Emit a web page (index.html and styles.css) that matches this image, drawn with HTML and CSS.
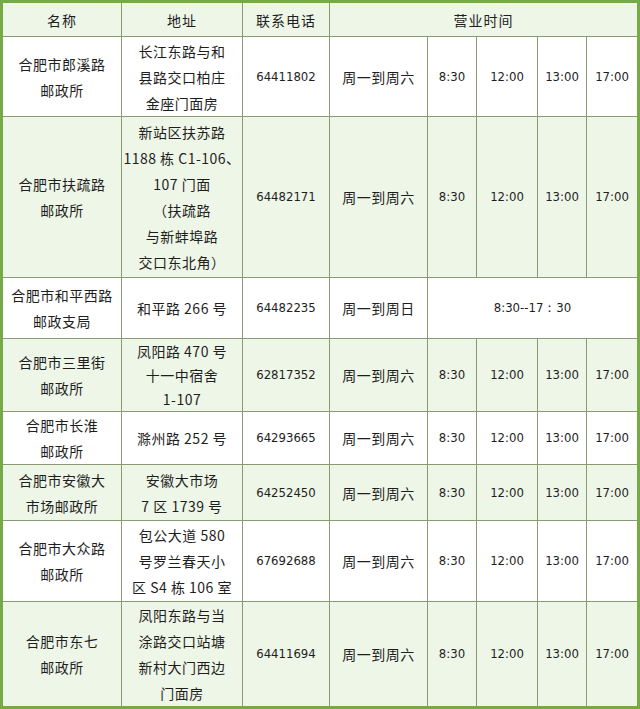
FILE: index.html
```html
<!DOCTYPE html>
<html lang="zh">
<head>
<meta charset="utf-8">
<link rel="stylesheet" href="styles.css">
</head>
<body>
<table class="tbl">
  <colgroup>
    <col class="c-name"><col class="c-addr"><col class="c-tel"><col class="c-day">
    <col class="c-t1"><col class="c-t2"><col class="c-t3"><col class="c-t4">
  </colgroup>
  <tr class="head green">
    <td>名称</td><td>地址</td><td>联系电话</td><td colspan="5">营业时间</td>
  </tr>
  <tr class="r1">
    <td class="name">合肥市郎溪路<br>邮政所</td>
    <td class="addr">长江东路与和<br>县路交口柏庄<br>金座门面房</td>
    <td class="num">64411802</td>
    <td>周一到周六</td><td class="num">8:30</td><td class="num">12:00</td><td class="num">13:00</td><td class="num">17:00</td>
  </tr>
  <tr class="r2 green">
    <td class="name">合肥市扶疏路<br>邮政所</td>
    <td class="addr">新站区扶苏路<br>1188 栋 C1-106、<br>107 门面<br>（扶疏路<br>与新蚌埠路<br>交口东北角）</td>
    <td class="num">64482171</td>
    <td>周一到周六</td><td class="num">8:30</td><td class="num">12:00</td><td class="num">13:00</td><td class="num">17:00</td>
  </tr>
  <tr class="r3">
    <td class="name">合肥市和平西路<br>邮政支局</td>
    <td class="addr">和平路 266 号</td>
    <td class="num">64482235</td>
    <td>周一到周日</td><td class="num" colspan="4">8:30--17：30</td>
  </tr>
  <tr class="r4 green">
    <td class="name">合肥市三里街<br>邮政所</td>
    <td class="addr tight">凤阳路 470 号<br>十一中宿舍<br>1-107</td>
    <td class="num">62817352</td>
    <td>周一到周六</td><td class="num">8:30</td><td class="num">12:00</td><td class="num">13:00</td><td class="num">17:00</td>
  </tr>
  <tr class="r5">
    <td class="name">合肥市长淮<br>邮政所</td>
    <td class="addr">滁州路 252 号</td>
    <td class="num">64293665</td>
    <td>周一到周六</td><td class="num">8:30</td><td class="num">12:00</td><td class="num">13:00</td><td class="num">17:00</td>
  </tr>
  <tr class="r6 green">
    <td class="name">合肥市安徽大<br>市场邮政所</td>
    <td class="addr">安徽大市场<br>7 区 1739 号</td>
    <td class="num">64252450</td>
    <td>周一到周六</td><td class="num">8:30</td><td class="num">12:00</td><td class="num">13:00</td><td class="num">17:00</td>
  </tr>
  <tr class="r7">
    <td class="name">合肥市大众路<br>邮政所</td>
    <td class="addr">包公大道 580<br>号罗兰春天小<br>区 S4 栋 106 室</td>
    <td class="num">67692688</td>
    <td>周一到周六</td><td class="num">8:30</td><td class="num">12:00</td><td class="num">13:00</td><td class="num">17:00</td>
  </tr>
  <tr class="r8 green">
    <td class="name">合肥市东七<br>邮政所</td>
    <td class="addr">凤阳东路与当<br>涂路交口站塘<br>新村大门西边<br>门面房</td>
    <td class="num">64411694</td>
    <td>周一到周六</td><td class="num">8:30</td><td class="num">12:00</td><td class="num">13:00</td><td class="num">17:00</td>
  </tr>
</table>
</body>
</html>
```

FILE: styles.css
```css
html, body {
  margin: 0;
  padding: 0;
  background: #ffffff;
}
.tbl {
  width: 640px;
  height: 709px;
  border-collapse: collapse;
  table-layout: fixed;
  border: 3px solid #76aa46;
  font-family: "Noto Sans CJK SC", "DejaVu Sans", sans-serif;
  font-size: 14px;
  color: #1e1e1e;
}
.c-name { width: 120px; }
.c-addr { width: 121px; }
.c-tel { width: 87px; }
.c-day { width: 98px; }
.c-t1 { width: 49px; }
.c-t2 { width: 61px; }
.c-t3 { width: 49px; }
.c-t4 { width: 52px; }
.tbl td {
  border: 1px solid #8a9a72;
  padding: 0;
  text-align: center;
  vertical-align: middle;
  white-space: nowrap;
  line-height: 26px;
  letter-spacing: 0.5px;
}
.green td { background: #eef6e8; }
.head td { letter-spacing: 1px; }
.addr { letter-spacing: 1px; }
.tbl td.tight { line-height: 24px; }
.num {
  font-family: "DejaVu Sans Condensed", "DejaVu Sans", sans-serif;
  font-size: 13px;
  letter-spacing: 0;
}
.tbl td.num { letter-spacing: 0; }
.head { height: 35px; }
.r1 { height: 80px; }
.r2 { height: 161px; }
.r3 { height: 61px; }
.r4 { height: 73px; }
.r5 { height: 53px; }
.r6 { height: 56px; }
.r7 { height: 81px; }
.r8 { height: 106px; }
```
